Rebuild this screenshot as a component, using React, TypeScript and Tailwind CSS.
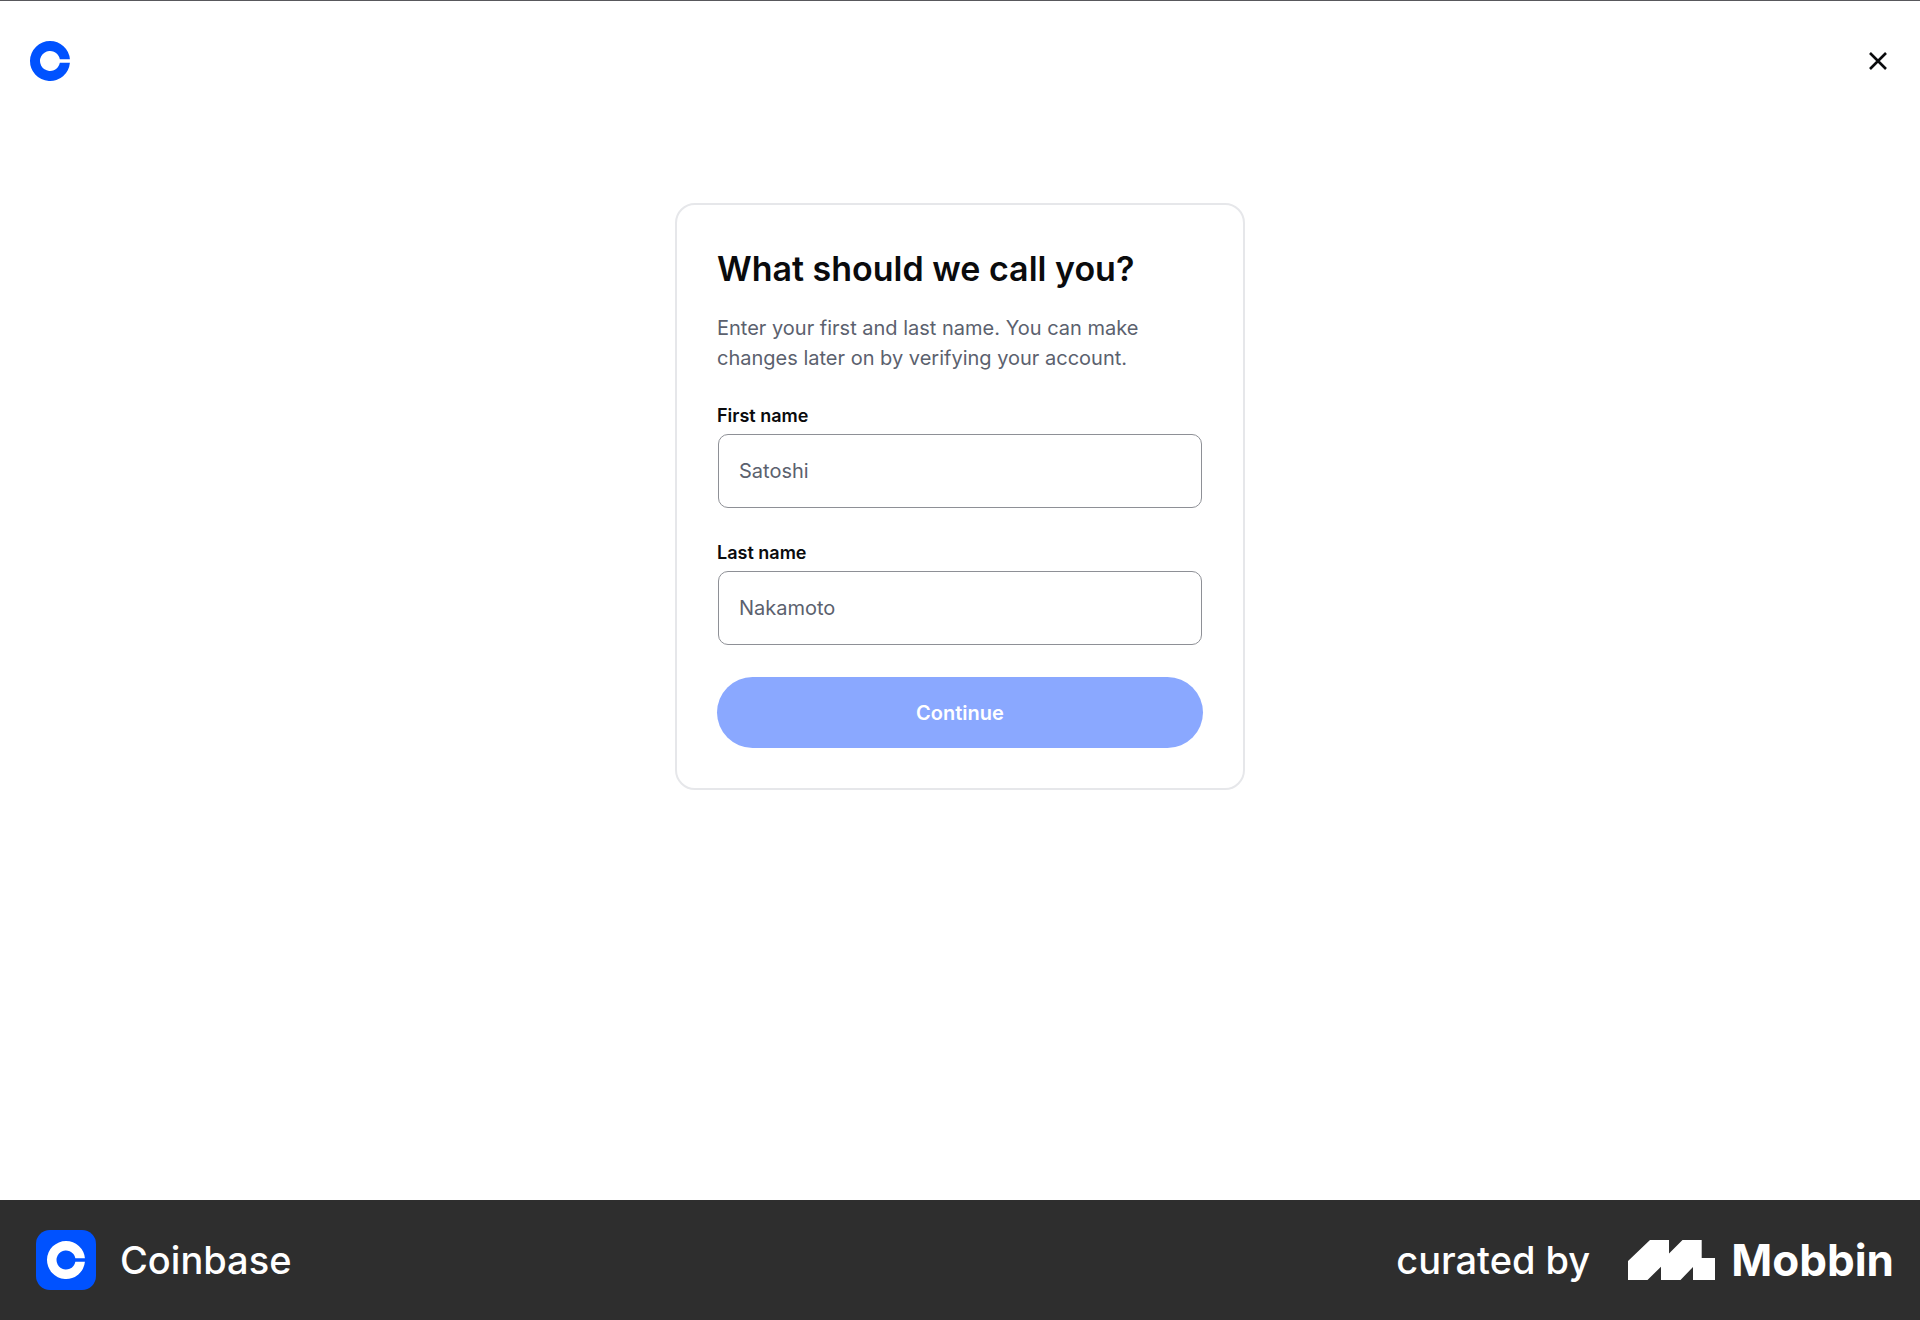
import { useState } from "react";

function CoinMark({ className }: { className: string }) {
  return (
    <svg viewBox="0 0 40 40" fill="currentColor" className={className} aria-hidden="true">
      <path d="M20 0a20 20 0 1 0 19.92 21.8H29.84a10 10 0 1 1 0-3.6h10.08A20 20 0 0 0 20 0Z" />
    </svg>
  );
}

function MobbinMark() {
  return (
    <svg viewBox="0 0 87 40" fill="currentColor" className="h-10 w-[87px]" aria-hidden="true">
      <path d="M0 21 22 0H41V13.5L54.5 0H73.7V18H87V40H65V27L52.5 40H33V26.7L19.5 40H0Z" />
    </svg>
  );
}

type FieldProps = {
  id: string;
  label: string;
  placeholder: string;
  value: string;
  onChange: (value: string) => void;
};

function Field({ id, label, placeholder, value, onChange }: FieldProps) {
  return (
    <div className="flex flex-col gap-1">
      <label htmlFor={id} className="text-lg leading-7 font-semibold text-[#0a0b0d]">
        {label}
      </label>
      <div className="px-px">
        <input
          id={id}
          type="text"
          placeholder={placeholder}
          value={value}
          onChange={(e) => onChange(e.target.value)}
          className="h-[74px] w-full rounded-[10px] border border-[#8e9096] bg-white px-5 text-xl text-[#0a0b0d] placeholder:text-[#5b616e]"
        />
      </div>
    </div>
  );
}

export default function App() {
  const [first, setFirst] = useState("");
  const [last, setLast] = useState("");
  const disabled = !first || !last;

  return (
    <div className="flex min-h-screen flex-col border-t border-[#58585c] bg-white font-['Inter',sans-serif] text-[#0a0b0d]">
      <header className="flex h-[120px] items-center justify-between px-[30px]">
        <a href="#" aria-label="Coinbase home" className="text-[#0052ff]">
          <CoinMark className="size-10" />
        </a>
        <button type="button" aria-label="Close" className="flex size-6 items-center justify-center">
          <svg viewBox="0 0 18 18" className="size-[18px]" fill="none" stroke="currentColor" strokeWidth="2.6" aria-hidden="true">
            <path d="M1 1 17 17M17 1 1 17" />
          </svg>
        </button>
      </header>

      <main className="flex flex-1 flex-col items-center px-4 pt-[82px]">
        <form
          onSubmit={(e) => e.preventDefault()}
          className="w-full max-w-[570px] rounded-[20px] border-2 border-[#e6e7ea] p-10"
        >
          <h1 className="text-[34px] leading-12 font-semibold">What should we call you?</h1>
          <p className="mt-5 text-xl leading-[30px] text-[#5b616e]">
            Enter your first and last name. You can make changes later on by verifying your account.
          </p>
          <div className="mt-[29px] flex flex-col gap-[31px]">
            <Field id="first-name" label="First name" placeholder="Satoshi" value={first} onChange={setFirst} />
            <Field id="last-name" label="Last name" placeholder="Nakamoto" value={last} onChange={setLast} />
          </div>
          <button
            type="submit"
            disabled={disabled}
            className="mt-8 h-[71px] w-full rounded-full bg-[#0052ff] text-xl font-semibold text-white disabled:bg-[#8aa8ff]"
          >
            Continue
          </button>
        </form>
      </main>

      <footer className="flex h-[120px] items-center justify-between bg-[#2e2e2e] pr-[26px] pl-9 text-white">
        <div className="flex items-center gap-6">
          <div className="flex size-[60px] items-center justify-center rounded-[14px] bg-[#0052ff]">
            <CoinMark className="size-[38px]" />
          </div>
          <span className="text-[38px] leading-[60px] font-medium">Coinbase</span>
        </div>
        <div className="flex items-center gap-[38px]">
          <span className="text-[38px] leading-[60px] font-medium">curated by</span>
          <div className="flex items-center gap-4">
            <MobbinMark />
            <span className="text-[44px] leading-[60px] font-bold">Mobbin</span>
          </div>
        </div>
      </footer>
    </div>
  );
}
